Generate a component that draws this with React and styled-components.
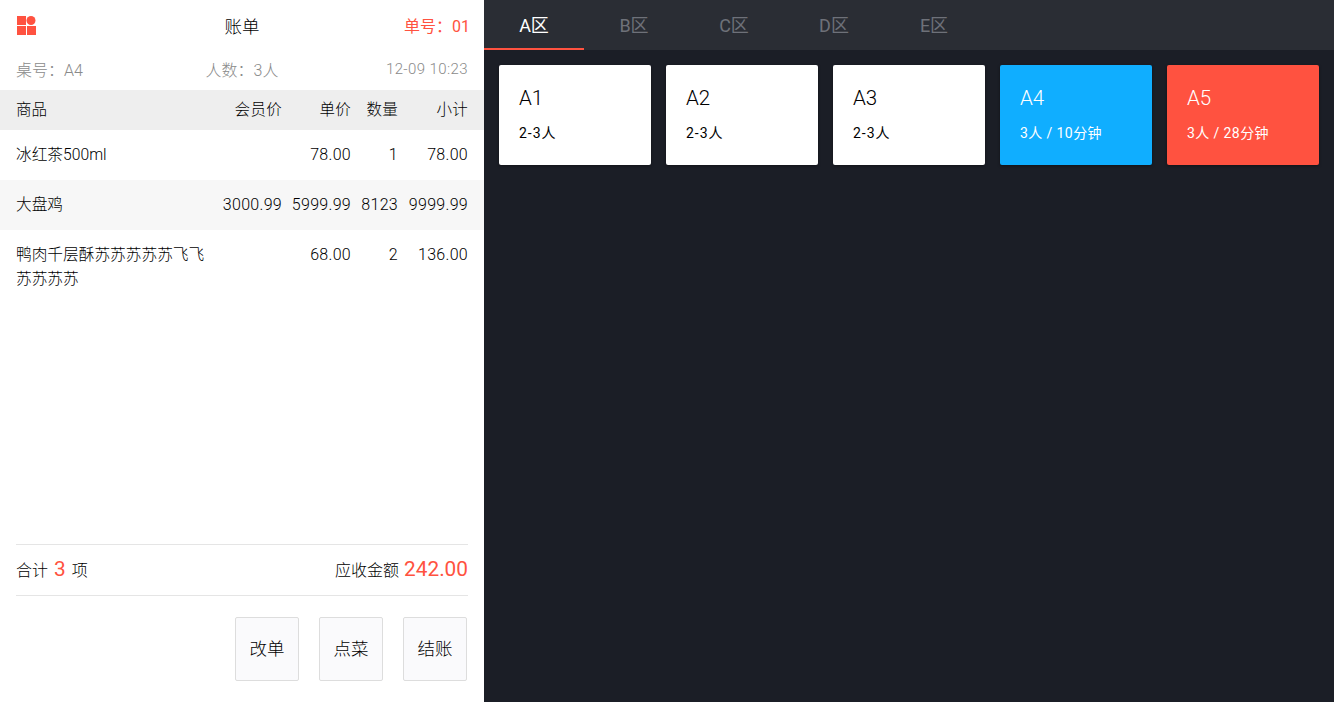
import styled, { createGlobalStyle } from "styled-components";

const GlobalStyle = createGlobalStyle`
    html, body {
        margin: 0;
        padding: 0;
        height: 100%;
    }
    body {
        font-family: "Roboto", "Noto Sans CJK SC", sans-serif;
        font-weight: 300;
        color: #000;
    }
`

const Page = styled.div`
    display: flex;
    width: 1334px;
    height: 702px;
    overflow: hidden;
`

const BillPanel = styled.div`
    width: 484px;
    flex-shrink: 0;
    background-color: #fff;
    display: flex;
    flex-direction: column;
`

const BillHeader = styled.div`
    height: 50px;
    padding: 0 14px 0 17px;
    display: grid;
    grid-template-columns: 1fr auto 1fr;
    align-items: center;
`

const BillTitle = styled.div`
    font-size: 17.5px;
    margin-right: 3px;
`

const OrderNo = styled.div`
    justify-self: end;
    font-size: 16px;
    font-weight: 400;
    color: #ff5240;
`

const InfoRow = styled.div`
    height: 40px;
    padding: 0 16px 2px;
    box-sizing: border-box;
    display: grid;
    grid-template-columns: 1fr 1fr 1fr;
    align-items: center;
    font-size: 16px;
    color: #8a8a8a;
`

const InfoMiddle = styled.span`
    justify-self: center;
`

const InfoTime = styled.span`
    justify-self: end;
    font-size: 15px;
    letter-spacing: 0.4px;
`

const TableRow = styled.div`
    display: grid;
    grid-template-columns: 196px 70px 69px 47px 70px;
    padding: ${({ $head }) => ($head ? "0" : "13px")} 16px 0 16px;
    height: ${({ $head }) => ($head ? "40px" : "50px")};
    box-sizing: border-box;
    align-items: ${({ $head }) => ($head ? "center" : "start")};
    background-color: ${({ $bg }) => $bg || "#fff"};
    font-size: ${({ $head }) => ($head ? "15.5px" : "16px")};
    line-height: 24px;
`

const ItemName = styled.div`
    width: 196px;
    font-size: ${({ $head }) => ($head ? "15.5px" : "15.7px")};
`

const NumCell = styled.div`
    text-align: right;
    white-space: nowrap;
    letter-spacing: 0.3px;
`

const Spacer = styled.div`
    flex: 1;
`

const Summary = styled.div`
    margin: 0 16px;
    padding-bottom: 3px;
    height: 47px;
    border-top: 1px solid #e5e5e5;
    border-bottom: 1px solid #e5e5e5;
    display: flex;
    align-items: center;
    justify-content: space-between;
    font-size: 16px;
`

const SummaryPart = styled.div`
    display: flex;
    align-items: center;
    gap: ${({ $gap }) => $gap || "6px"};
`

const RedValue = styled.span`
    font-size: 20.8px;
    font-weight: 400;
    color: #ff5240;
`

const Actions = styled.div`
    height: 106px;
    box-sizing: border-box;
    padding: 21px 17px 0 0;
    display: flex;
    justify-content: flex-end;
    gap: 20px;
`

const ActionButton = styled.button`
    width: 64px;
    height: 64px;
    padding: 0 0 3px;
    box-sizing: border-box;
    background-color: #fafafc;
    border: 1px solid #ddd;
    border-radius: 2px;
    font-family: inherit;
    font-weight: inherit;
    font-size: 17.5px;
    color: #000;
`

const FloorPanel = styled.div`
    flex: 1;
    background-color: #1b1e26;
`

const TabBar = styled.div`
    height: 50px;
    display: flex;
    background-color: #2a2d34;
`

const Tab = styled.div`
    width: 100px;
    height: 50px;
    box-sizing: border-box;
    display: flex;
    align-items: center;
    justify-content: center;
    font-size: 18px;
    font-weight: 400;
    color: ${({ $active }) => ($active ? "#fff" : "#6e7179")};
    border-bottom: 2px solid ${({ $active }) => ($active ? "#ff5240" : "transparent")};
`

const TableGrid = styled.div`
    padding: 15px;
    display: flex;
    gap: 15px;
`

const TableCard = styled.div`
    width: 152px;
    height: 100px;
    box-sizing: border-box;
    padding: 21px 20px 0;
    border-radius: 2px;
    box-shadow: 0 1px 3px rgba(0, 0, 0, 0.4);
    background-color: ${({ $bg }) => $bg || "#fff"};
    color: ${({ $bg }) => ($bg ? "#fff" : "#000")};
`

const CardName = styled.div`
    font-size: 20.5px;
    line-height: 24px;
`

const CardInfo = styled.div`
    font-size: 14px;
    font-weight: 400;
    line-height: 20px;
    margin-top: 13px;
    letter-spacing: ${({ $busy }) => ($busy ? "0.4px" : "1px")};
    white-space: pre;
`

const LogoIcon = () => (
    <svg width="19" height="19" viewBox="0 0 19 19" fill="#ff5240">
        <rect x="0" y="0" width="9" height="9" />
        <circle cx="14" cy="4.5" r="4.5" />
        <rect x="0" y="10" width="9" height="9" />
        <rect x="10" y="10" width="9" height="9" />
    </svg>
)

const items = [
    { name: "冰红茶500ml", member: "", price: "78.00", count: "1", total: "78.00" },
    { name: "大盘鸡", member: "3000.99", price: "5999.99", count: "8123", total: "9999.99", bg: "#f7f7f7" },
    { name: "鸭肉千层酥苏苏苏苏苏飞飞苏苏苏苏", member: "", price: "68.00", count: "2", total: "136.00" },
]

const tabs = ["A区", "B区", "C区", "D区", "E区"]

const tables = [
    { name: "A1", info: "2-3人" },
    { name: "A2", info: "2-3人" },
    { name: "A3", info: "2-3人" },
    { name: "A4", info: "3人 / 10分钟", bg: "#10aeff" },
    { name: "A5", info: "3人 / 28分钟", bg: "#ff5240" },
]

export default function App() {
    return (
        <Page>
            <GlobalStyle />
            <BillPanel>
                <BillHeader>
                    <LogoIcon />
                    <BillTitle>账单</BillTitle>
                    <OrderNo>单号：01</OrderNo>
                </BillHeader>
                <InfoRow>
                    <span>桌号：A4</span>
                    <InfoMiddle>人数：3人</InfoMiddle>
                    <InfoTime>12-09 10:23</InfoTime>
                </InfoRow>
                <TableRow $head $bg="#eee">
                    <ItemName $head>商品</ItemName>
                    <NumCell>会员价</NumCell>
                    <NumCell>单价</NumCell>
                    <NumCell>数量</NumCell>
                    <NumCell>小计</NumCell>
                </TableRow>
                {items.map((item) => (
                    <TableRow key={item.name} $bg={item.bg}>
                        <ItemName>{item.name}</ItemName>
                        <NumCell>{item.member}</NumCell>
                        <NumCell>{item.price}</NumCell>
                        <NumCell>{item.count}</NumCell>
                        <NumCell>{item.total}</NumCell>
                    </TableRow>
                ))}
                <Spacer />
                <Summary>
                    <SummaryPart>
                        合计 <RedValue>3</RedValue> 项
                    </SummaryPart>
                    <SummaryPart $gap="5px">
                        应收金额 <RedValue>242.00</RedValue>
                    </SummaryPart>
                </Summary>
                <Actions>
                    <ActionButton>改单</ActionButton>
                    <ActionButton>点菜</ActionButton>
                    <ActionButton>结账</ActionButton>
                </Actions>
            </BillPanel>
            <FloorPanel>
                <TabBar>
                    {tabs.map((tab, i) => (
                        <Tab key={tab} $active={i === 0}>{tab}</Tab>
                    ))}
                </TabBar>
                <TableGrid>
                    {tables.map((table) => (
                        <TableCard key={table.name} $bg={table.bg}>
                            <CardName>{table.name}</CardName>
                            <CardInfo $busy={!!table.bg}>{table.info}</CardInfo>
                        </TableCard>
                    ))}
                </TableGrid>
            </FloorPanel>
        </Page>
    )
}
